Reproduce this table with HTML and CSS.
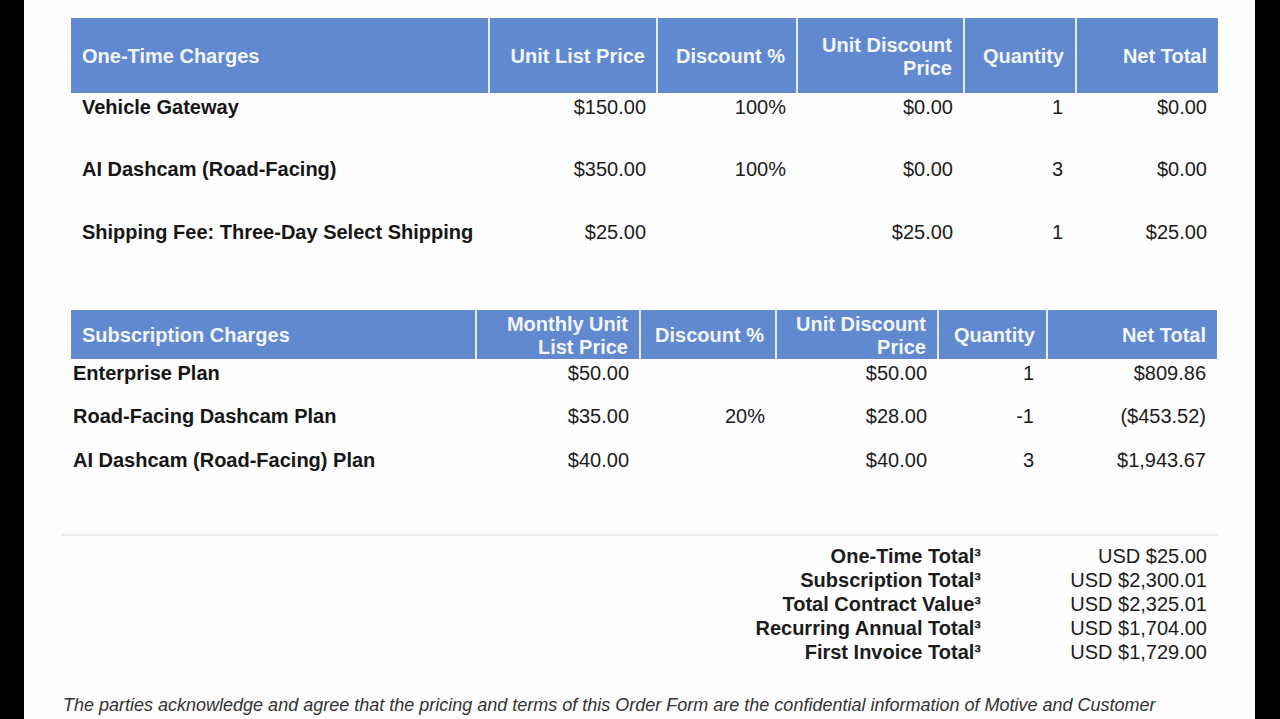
FILE: index.html
```html
<!DOCTYPE html>
<html lang="en">
<head>
<meta charset="utf-8">
<title>Order Form Pricing</title>
<link rel="stylesheet" href="styles.css">
</head>
<body>
<div class="screen">
  <div class="page">
    <table class="charges one-time">
      <colgroup>
        <col class="c-desc"><col class="c-list"><col class="c-disc"><col class="c-udp"><col class="c-qty"><col class="c-net">
      </colgroup>
      <thead>
        <tr>
          <th class="desc">One-Time Charges</th>
          <th>Unit List Price</th>
          <th>Discount %</th>
          <th>Unit Discount Price</th>
          <th>Quantity</th>
          <th>Net Total</th>
        </tr>
      </thead>
      <tbody>
        <tr>
          <td class="desc">Vehicle Gateway</td>
          <td>$150.00</td>
          <td>100%</td>
          <td>$0.00</td>
          <td class="qty">1</td>
          <td>$0.00</td>
        </tr>
        <tr>
          <td class="desc">AI Dashcam (Road-Facing)</td>
          <td>$350.00</td>
          <td>100%</td>
          <td>$0.00</td>
          <td class="qty">3</td>
          <td>$0.00</td>
        </tr>
        <tr>
          <td class="desc">Shipping Fee: Three-Day Select Shipping</td>
          <td>$25.00</td>
          <td></td>
          <td>$25.00</td>
          <td class="qty">1</td>
          <td>$25.00</td>
        </tr>
      </tbody>
    </table>

    <table class="charges subscription">
      <colgroup>
        <col class="c-desc"><col class="c-list"><col class="c-disc"><col class="c-udp"><col class="c-qty"><col class="c-net">
      </colgroup>
      <thead>
        <tr>
          <th class="desc">Subscription Charges</th>
          <th>Monthly Unit List Price</th>
          <th>Discount %</th>
          <th>Unit Discount Price</th>
          <th>Quantity</th>
          <th>Net Total</th>
        </tr>
      </thead>
      <tbody>
        <tr>
          <td class="desc">Enterprise Plan</td>
          <td>$50.00</td>
          <td></td>
          <td>$50.00</td>
          <td class="qty">1</td>
          <td>$809.86</td>
        </tr>
        <tr>
          <td class="desc">Road-Facing Dashcam Plan</td>
          <td>$35.00</td>
          <td>20%</td>
          <td>$28.00</td>
          <td class="qty">-1</td>
          <td>($453.52)</td>
        </tr>
        <tr>
          <td class="desc">AI Dashcam (Road-Facing) Plan</td>
          <td>$40.00</td>
          <td></td>
          <td>$40.00</td>
          <td class="qty">3</td>
          <td>$1,943.67</td>
        </tr>
      </tbody>
    </table>

    <div class="rule"></div>

    <dl class="totals">
      <dt>One-Time Total³</dt><dd>USD $25.00</dd>
      <dt>Subscription Total³</dt><dd>USD $2,300.01</dd>
      <dt>Total Contract Value³</dt><dd>USD $2,325.01</dd>
      <dt>Recurring Annual Total³</dt><dd>USD $1,704.00</dd>
      <dt>First Invoice Total³</dt><dd>USD $1,729.00</dd>
    </dl>

    <p class="note">The parties acknowledge and agree that the pricing and terms of this Order Form are the confidential information of Motive and Customer</p>
  </div>
</div>
</body>
</html>
```

FILE: styles.css
```css
* { box-sizing: border-box; }

html, body {
  margin: 0;
  padding: 0;
  background: #000;
}

body {
  font-family: "Liberation Sans", Arial, Helvetica, sans-serif;
}

.screen {
  width: 1280px;
  height: 719px;
  overflow: hidden;
  display: flex;
  background: #000;
}

.page {
  margin-left: 24px;
  width: 1231px;
  height: 719px;
  background: #fdfdfd;
  padding-top: 18px;
  overflow: hidden;
}

.charges {
  border-collapse: collapse;
  table-layout: fixed;
  margin-left: 47px;
  font-size: 20px;
  line-height: 23px;
  color: #1c1c1c;
}

.charges th {
  background: #6089cf;
  color: #f2f5fb;
  font-weight: bold;
  text-align: right;
  vertical-align: middle;
  padding: 2px 11px 0;
}

.charges th + th {
  border-left: 2px solid #e6ecf7;
}

.charges th.desc {
  text-align: left;
}

.charges td {
  text-align: right;
  vertical-align: top;
  padding: 2.5px 11px 0;
  white-space: nowrap;
}

.charges td.desc {
  text-align: left;
  font-weight: bold;
  color: #161616;
}

.charges td.qty {
  padding-right: 13px;
}

/* one-time table */
.one-time { width: 1147px; }
.one-time .c-desc { width: 418px; }
.one-time .c-list { width: 168px; }
.one-time .c-disc { width: 140px; }
.one-time .c-udp  { width: 167px; }
.one-time .c-qty  { width: 112px; }
.one-time .c-net  { width: 142px; }
.one-time thead tr { height: 75px; }
.one-time tbody tr { height: 62.5px; }

/* subscription table */
.subscription {
  width: 1146px;
  margin-top: 29.5px;
}
.subscription .c-desc { width: 405px; }
.subscription .c-list { width: 164px; }
.subscription .c-disc { width: 136px; }
.subscription .c-udp  { width: 162px; }
.subscription .c-qty  { width: 109px; }
.subscription .c-net  { width: 170px; }
.subscription thead tr { height: 49px; }
.subscription tbody tr { height: 43.5px; }
.subscription td.desc { padding-left: 2px; }

.rule {
  margin: 44.5px 0 0 37px;
  width: 1157px;
  height: 2px;
  background: #ececec;
}

.totals {
  display: grid;
  grid-template-columns: auto 226px;
  justify-content: end;
  margin: 8px 48px 0 0;
  font-size: 20px;
  line-height: 24px;
  color: #1c1c1c;
}

.totals dt {
  font-weight: bold;
  text-align: right;
}

.totals dd {
  margin: 0;
  text-align: right;
}

.note {
  margin: 31px 0 0 39px;
  font-style: italic;
  font-size: 18px;
  line-height: 21px;
  color: #333;
  white-space: nowrap;
}
```
